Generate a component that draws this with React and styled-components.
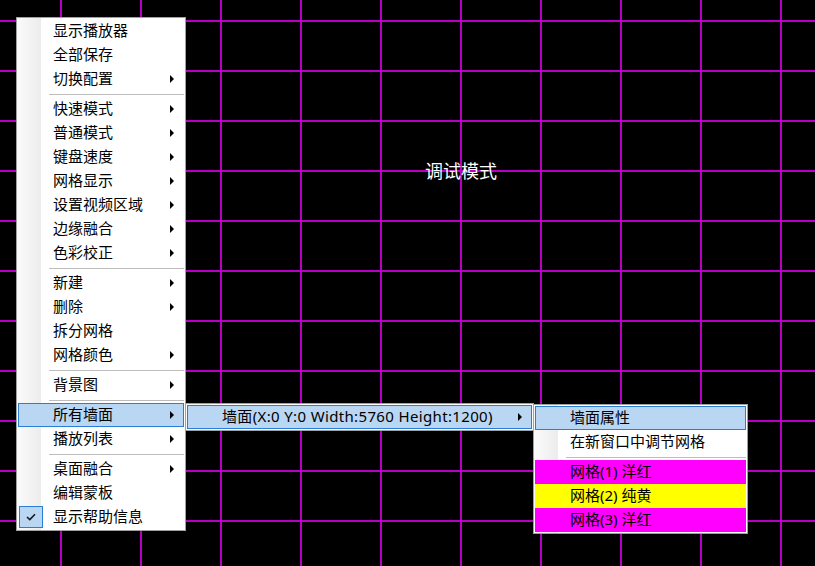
import React from 'react';
import styled, { createGlobalStyle } from 'styled-components';

const GlobalStyle = createGlobalStyle`
  html, body {
    margin: 0;
    padding: 0;
    background: #000;
  }
`;

const Canvas = styled.div`
  position: relative;
  width: 815px;
  height: 566px;
  overflow: hidden;
  background-color: #000;
  background-image:
    linear-gradient(to right, #b800c4 0 2px, transparent 2px),
    linear-gradient(to bottom, #b800c4 0 2px, transparent 2px);
  background-size: 80px 100%, 100% 50px;
  background-position: 60px 0, 0 20px;
  font-family: "Noto Sans", "Noto Sans CJK SC", sans-serif;
`;

const Caption = styled.div`
  position: absolute;
  left: 425px;
  top: 158px;
  color: #fff;
  font-size: 18px;
  line-height: 24px;
  font-family: "Noto Sans CJK SC", sans-serif;
`;

const MenuPanel = styled.div`
  position: absolute;
  left: ${p => p.$x}px;
  top: ${p => p.$y}px;
  width: ${p => p.$w}px;
  box-sizing: border-box;
  display: flex;
  flex-direction: column;
  padding: 1px 0;
  border: 1px solid #a0a0a0;
  background: #fff linear-gradient(to right, #fbfbfb, #ececec) no-repeat 0 0 / 24px 100%;
  font-size: 15px;
  color: #000;
  letter-spacing: ${p => p.$spacing || 0}px;
`;

const Item = styled.div`
  position: relative;
  height: 24px;
  margin: 0 1px;
  box-sizing: border-box;
  display: flex;
  align-items: center;
  padding: 0 0 2px 34px;
  border: 1px solid ${p => (p.$active ? '#2a7fd4' : 'transparent')};
  background: ${p => (p.$active ? '#b9d6f3' : p.$fill || 'transparent')};
  white-space: nowrap;
  line-height: 20px;
`;

const Arrow = styled.span`
  margin-left: auto;
  margin-right: 9px;
  margin-top: 2px;
  width: 0;
  height: 0;
  border-left: 4px solid #000;
  border-top: 4px solid transparent;
  border-bottom: 4px solid transparent;
`;

const Separator = styled.div`
  height: 6px;
  box-sizing: border-box;
  padding-top: 3px;
  margin: 0 1px 0 32px;

  &::before {
    content: '';
    display: block;
    height: 1px;
    background: #bdbdbd;
  }
`;

const CheckBox = styled.span`
  position: absolute;
  left: 0;
  top: 0;
  width: 24px;
  height: 22px;
  box-sizing: border-box;
  border: 1px solid #2a7fd4;
  background: #b9d6f3;
  display: flex;
  align-items: center;
  justify-content: center;
`;

const CheckMark = () => (
  <svg width="10" height="8" viewBox="0 0 10 8">
    <path d="M1 4 L3.8 6.6 L9 1.2" fill="none" stroke="#1a1a1a" strokeWidth="1.6" />
  </svg>
);

const mainMenu = [
  [['显示播放器'], ['全部保存'], ['切换配置', true]],
  [
    ['快速模式', true], ['普通模式', true], ['键盘速度', true], ['网格显示', true],
    ['设置视频区域', true], ['边缘融合', true], ['色彩校正', true],
  ],
  [['新建', true], ['删除', true], ['拆分网格'], ['网格颜色', true]],
  [['背景图', true]],
  [['所有墙面', true, true], ['播放列表', true]],
  [['桌面融合', true], ['编辑蒙板'], ['显示帮助信息', false, false, true]],
];

const MenuGroups = ({ groups }) =>
  groups.map((group, gi) => (
    <React.Fragment key={gi}>
      {gi > 0 && <Separator />}
      {group.map(([label, sub, active, checked, fill]) => (
        <Item key={label} $active={active} $fill={fill}>
          {checked && (
            <CheckBox>
              <CheckMark />
            </CheckBox>
          )}
          {label}
          {sub && <Arrow />}
        </Item>
      ))}
    </React.Fragment>
  ));

export default function App() {
  return (
    <>
      <GlobalStyle />
      <Canvas>
        <Caption>调试模式</Caption>

        <MenuPanel $x={16} $y={17} $w={170}>
          <MenuGroups groups={mainMenu} />
        </MenuPanel>

        <MenuPanel $x={185} $y={403} $w={349} $spacing={0.35}>
          <MenuGroups groups={[[['墙面(X:0 Y:0 Width:5760 Height:1200)', true, true]]]} />
        </MenuPanel>

        <MenuPanel $x={533} $y={404} $w={215}>
          <MenuGroups
            groups={[
              [['墙面属性', false, true], ['在新窗口中调节网格']],
              [
                ['网格(1) 洋红', false, false, false, '#ff00ff'],
                ['网格(2) 纯黄', false, false, false, '#ffff00'],
                ['网格(3) 洋红', false, false, false, '#ff00ff'],
              ],
            ]}
          />
        </MenuPanel>
      </Canvas>
    </>
  );
}
